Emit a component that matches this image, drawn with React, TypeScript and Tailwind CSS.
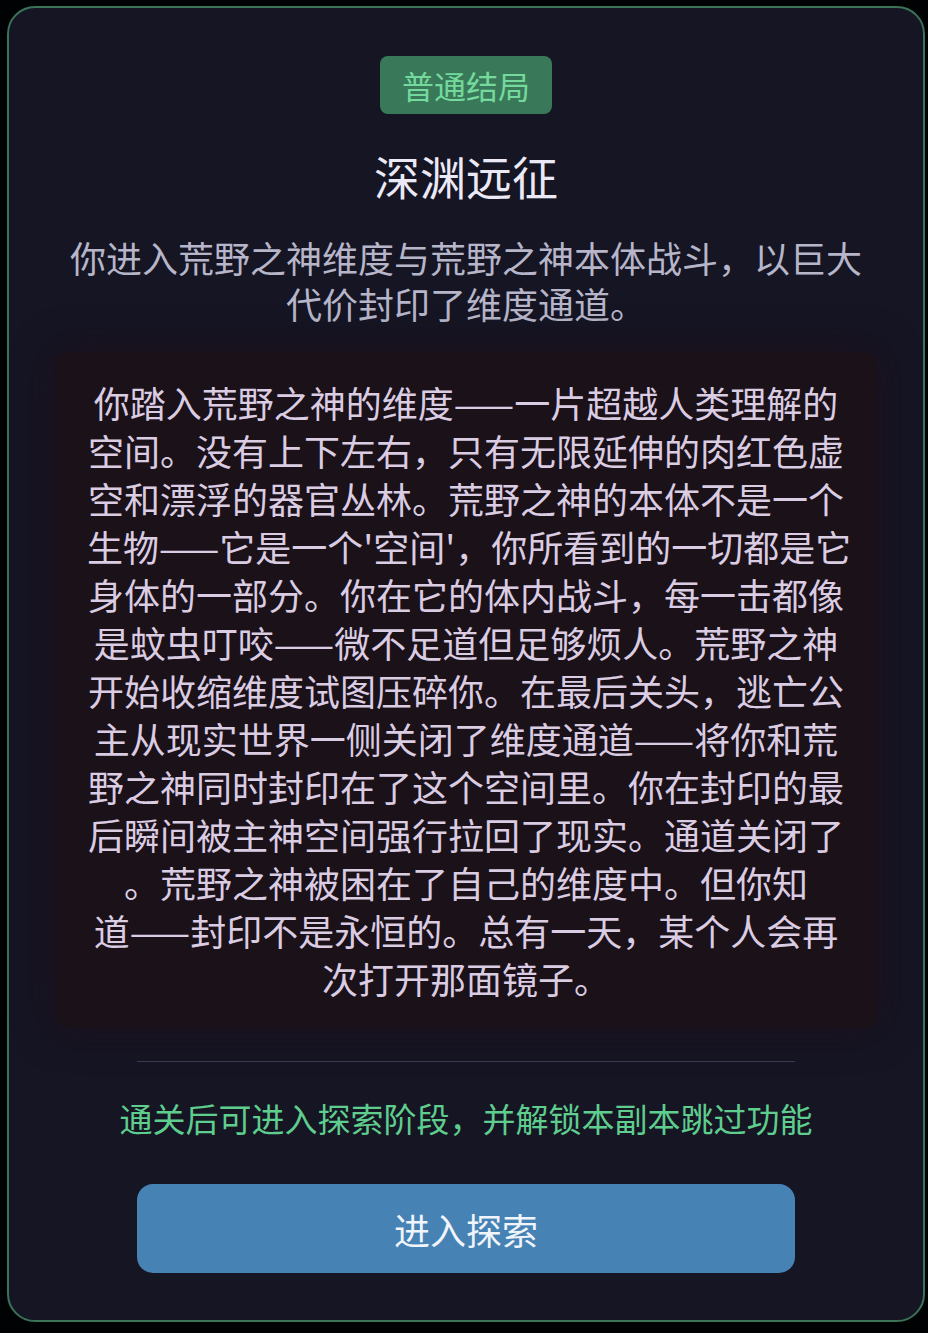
import React from "react";

const storyLines = [
  "你踏入荒野之神的维度——一片超越人类理解的",
  "空间。没有上下左右，只有无限延伸的肉红色虚",
  "空和漂浮的器官丛林。荒野之神的本体不是一个",
  "生物——它是一个'空间'，你所看到的一切都是它",
  "身体的一部分。你在它的体内战斗，每一击都像",
  "是蚊虫叮咬——微不足道但足够烦人。荒野之神",
  "开始收缩维度试图压碎你。在最后关头，逃亡公",
  "主从现实世界一侧关闭了维度通道——将你和荒",
  "野之神同时封印在了这个空间里。你在封印的最",
  "后瞬间被主神空间强行拉回了现实。通道关闭了",
  "。荒野之神被困在了自己的维度中。但你知",
  "道——封印不是永恒的。总有一天，某个人会再",
  "次打开那面镜子。",
];

function EndingDialog() {
  return (
    <div className="flex w-[918px] flex-col items-center rounded-[28px] border-2 border-[#3b7258] bg-[#151523] px-[46px] pt-[48px] pb-[47px]">
      <span className="flex h-[58px] items-center rounded-lg bg-[#397959] px-[22px] text-[32px] text-[#74d99c]">
        普通结局
      </span>
      <h1 className="mt-[31px] text-[46px] leading-[60px] text-[#ece9f6]">深渊远征</h1>
      <p className="mt-[29px] text-center text-[36px] leading-[46px] text-[#b6b5c9]">
        你进入荒野之神维度与荒野之神本体战斗，以巨大代价封印了维度通道。
      </p>

      <div className="mt-[26px] w-full rounded-xl bg-[#1b1118] px-8 pt-[26px] pb-[25px] text-center text-[36px] leading-[48px] text-[#dacce2] shadow-[0_0_40px_rgba(40,12,24,0.55)]">
        {storyLines.map((line, i) => (
          <div key={i} className="whitespace-nowrap">
            {line}
          </div>
        ))}
      </div>

      <div className="mt-[34px] h-px w-4/5 bg-[#393a4f]" />

      <p className="mt-[34px] text-[33px] leading-[44px] text-[#5ecd8e]">
        通关后可进入探索阶段，并解锁本副本跳过功能
      </p>

      <button className="mt-[44px] h-[89px] w-4/5 rounded-2xl bg-[#4682b4] text-[36px] text-[#f0f4fb]">
        进入探索
      </button>
    </div>
  );
}

export default function App() {
  return (
    <div
      className="relative h-[1333px] w-full overflow-hidden bg-[#0d0e17]"
      style={{ fontFamily: '"Noto Sans CJK SC", "Noto Sans", sans-serif' }}
    >
      {/* dimmed overlay behind the dialog */}
      <div className="absolute inset-0 flex items-start bg-black/85 pt-[6px] pl-[7px]">
        <EndingDialog />
      </div>
    </div>
  );
}
